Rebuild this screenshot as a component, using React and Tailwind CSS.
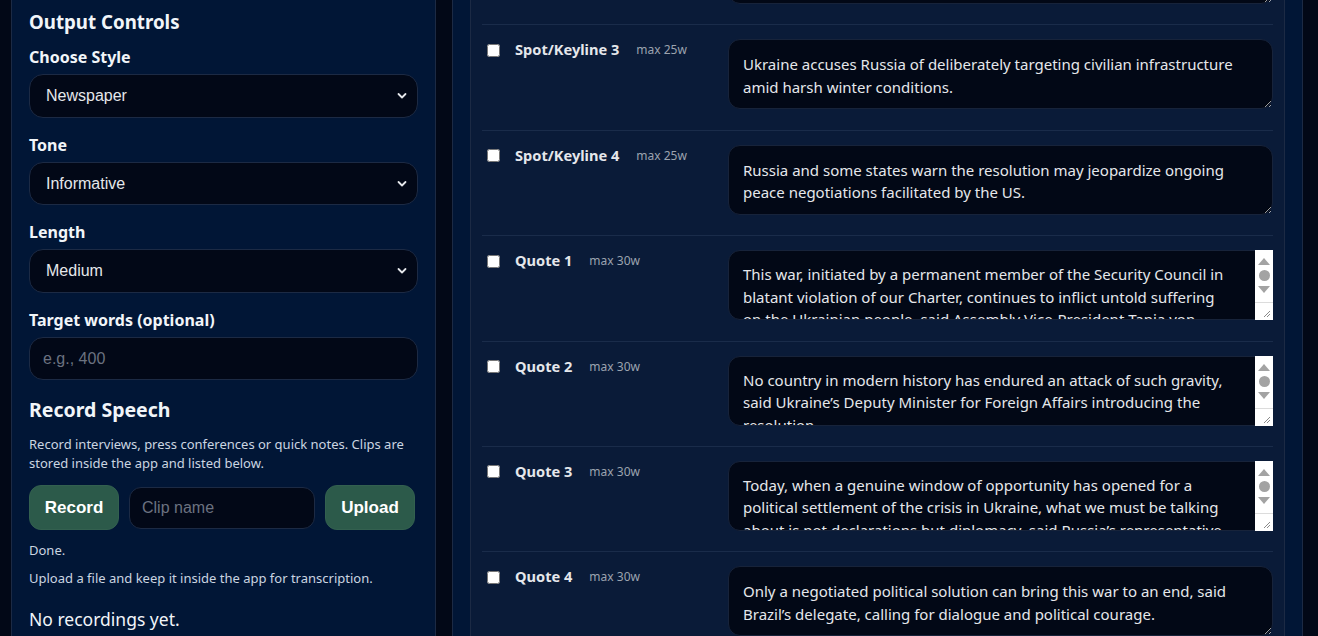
import React from 'react';

const rows = [
  {
    label: 'Spot/Keyline 2',
    max: 'max 25w',
    text: 'The General Assembly adopted a resolution reaffirming support for Ukraine’s sovereignty and territorial integrity.',
  },
  {
    label: 'Spot/Keyline 3',
    max: 'max 25w',
    text: 'Ukraine accuses Russia of deliberately targeting civilian infrastructure amid harsh winter conditions.',
  },
  {
    label: 'Spot/Keyline 4',
    max: 'max 25w',
    text: 'Russia and some states warn the resolution may jeopardize ongoing peace negotiations facilitated by the US.',
  },
  {
    label: 'Quote 1',
    max: 'max 30w',
    scroll: true,
    text: 'This war, initiated by a permanent member of the Security Council in blatant violation of our Charter, continues to inflict untold suffering on the Ukrainian people, said Assembly Vice-President Tania von Uslar-Gleichen.',
  },
  {
    label: 'Quote 2',
    max: 'max 30w',
    scroll: true,
    text: 'No country in modern history has endured an attack of such gravity, said Ukraine’s Deputy Minister for Foreign Affairs introducing the resolution.',
  },
  {
    label: 'Quote 3',
    max: 'max 30w',
    scroll: true,
    text: 'Today, when a genuine window of opportunity has opened for a political settlement of the crisis in Ukraine, what we must be talking about is not declarations but diplomacy, said Russia’s representative.',
  },
  {
    label: 'Quote 4',
    max: 'max 30w',
    text: 'Only a negotiated political solution can bring this war to an end, said Brazil’s delegate, calling for dialogue and political courage.',
  },
];

const Chevron = () => (
  <svg className="pointer-events-none absolute right-[11px] top-1/2 -translate-y-1/2" width="10" height="7" viewBox="0 0 10 7">
    <path d="M1.5 1.5 L5 5 L8.5 1.5" fill="none" stroke="#e5e7eb" strokeWidth="1.8" strokeLinecap="round" strokeLinejoin="round" />
  </svg>
);

const Field = ({ label, value, options }) => (
  <div className="mt-[17px] first:mt-0">
    <div className="mb-[7px] text-[16px] font-bold leading-5 text-[#f1f5f9]">{label}</div>
    <div className="relative">
      <select
        defaultValue={value}
        className="h-[43.7px] w-full appearance-none rounded-[14px] border border-[#1c2a44] bg-[#020817] pl-4 text-[16px] text-[#e5e7eb] outline-none"
        style={{ fontFamily: '"Liberation Sans", Arial, sans-serif' }}
      >
        {options.map((o) => (
          <option key={o}>{o}</option>
        ))}
      </select>
      <Chevron />
    </div>
  </div>
);

// windows-style scrollbar drawn over the clipped quote boxes
const FakeScrollbar = () => (
  <div className="pointer-events-none absolute right-0 top-0 bottom-0 flex w-[18px] flex-col bg-white">
    <div className="flex flex-1 flex-col items-center pt-[8px]">
      <svg width="12" height="7" viewBox="0 0 12 7"><path d="M0 7 L6 0 L12 7 Z" fill="#a3a3a3" /></svg>
      <div className="mt-[5px] h-[11px] w-[11px] rounded-full bg-[#a3a3a3]" />
      <svg className="mt-[5px]" width="12" height="7" viewBox="0 0 12 7"><path d="M0 0 L6 7 L12 0 Z" fill="#a3a3a3" /></svg>
    </div>
    <div className="relative h-[18px] border-t border-[#dcdcdc]">
      <svg className="absolute bottom-[2px] right-[2px]" width="9" height="9" viewBox="0 0 9 9">
        <path d="M8 2 L2 8 M8 5 L5 8" stroke="#8a8a8a" strokeWidth="1" />
      </svg>
    </div>
  </div>
);

const Row = ({ row, first }) => (
  <div className={`flex items-start pl-[5px] pt-[14px] pb-[20.4px] ${first ? '' : 'border-t border-[#1a2c4a]'}`}>
    <div className="mt-px flex h-5 w-[241px] shrink-0 items-center">
      <input type="checkbox" className="h-[13px] w-[13px] shrink-0" />
      <span className="ml-[15px] text-[14.6px] font-bold text-[#e5e7eb]">{row.label}</span>
      <span className="ml-[17px] text-[12px] text-[#9ca3af]">{row.max}</span>
    </div>
    <div className="relative flex-1">
      <textarea
        defaultValue={row.text}
        className={`block h-[70px] w-full overflow-hidden border border-[#17233a] bg-[#020816] pb-[10px] pl-[14px] text-[15px] leading-[22.5px] text-[#e5e7eb] outline-none ${
          row.scroll
            ? 'resize-none rounded-l-[12px] rounded-r-none pt-[12px] pr-[42px]'
            : 'resize-y rounded-[12px] pt-[13px] pr-[14px]'
        }`}
      />
      {row.scroll && <FakeScrollbar />}
    </div>
  </div>
);

export default function App() {
  return (
    <div
      className="flex h-[636px] gap-4 overflow-hidden bg-[#020817] px-[11px]"
      style={{ fontFamily: '"Noto Sans", "Open Sans", sans-serif' }}
    >
      {/* Left controls */}
      <aside className="h-full w-[425px] shrink-0 border-x border-[#1c2a44] bg-[#011636] px-[17px] pt-[10px]">
        <h2 className="text-[18.7px] font-bold leading-6 text-[#f1f5f9]">Output Controls</h2>
        <div className="mt-[13px]">
          <Field label="Choose Style" value="Newspaper" options={['Newspaper', 'Magazine', 'Broadcast', 'Web']} />
          <Field label="Tone" value="Informative" options={['Informative', 'Neutral', 'Persuasive']} />
          <Field label="Length" value="Medium" options={['Short', 'Medium', 'Long']} />
          <div className="mt-[17px]">
            <div className="mb-[7px] text-[16px] font-bold leading-5 text-[#f1f5f9]">Target words (optional)</div>
            <input
              placeholder="e.g., 400"
              className="h-[43px] w-full rounded-[14px] border border-[#1c2a44] bg-[#020817] px-[13px] text-[16px] text-[#e5e7eb] outline-none placeholder:text-[#6b7280]"
              style={{ fontFamily: '"Liberation Sans", Arial, sans-serif' }}
            />
          </div>
        </div>

        <h2 className="mt-[18px] text-[19.5px] font-bold leading-6 text-[#f1f5f9]">Record Speech</h2>
        <p className="mt-[13px] text-[13px] leading-[19px] text-[#cbd5e1]">
          Record interviews, press conferences or quick notes. Clips are stored inside the app and listed below.
        </p>
        <div
          className="mt-[12px] flex items-center gap-[10px]"
          style={{ fontFamily: '"Liberation Sans", Arial, sans-serif' }}
        >
          <button className="h-[45px] w-[90px] rounded-[12px] border border-[#33604f] bg-[#2c5a4a] text-[17px] font-bold text-white">
            Record
          </button>
          <input
            placeholder="Clip name"
            className="h-[42px] w-[186px] rounded-[12px] border border-[#1c2a44] bg-[#020817] px-3 text-[16px] text-[#e5e7eb] outline-none placeholder:text-[#6b7280]"
          />
          <button className="h-[45px] w-[90px] rounded-[12px] border border-[#33604f] bg-[#2c5a4a] text-[17px] font-bold text-white">
            Upload
          </button>
        </div>
        <p className="mt-[11px] text-[13px] leading-[19px] text-[#cbd5e1]">Done.</p>
        <p className="mt-[9px] text-[13px] leading-[19px] text-[#cbd5e1]">
          Upload a file and keep it inside the app for transcription.
        </p>
        <p className="mt-[17px] text-[17.5px] leading-7 text-[#f1f5f9]">No recordings yet.</p>
      </aside>

      {/* Output fields */}
      <main className="h-full w-[851px] shrink-0 border-x border-[#1c2a44] bg-[#011636] px-[17px]">
        <div className="-mt-[81px] rounded-[12px] border border-[#1c2a44] bg-[#0a1b38] px-[11px]">
          {rows.map((row, i) => (
            <Row key={row.label} row={row} first={i === 0} />
          ))}
        </div>
      </main>
    </div>
  );
}
